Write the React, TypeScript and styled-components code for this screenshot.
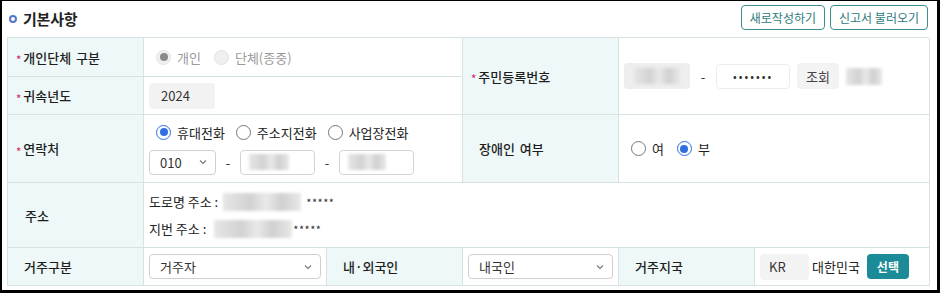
import styled, { createGlobalStyle } from "styled-components";

const GlobalStyle = createGlobalStyle`
  html, body {
    margin: 0;
    padding: 0;
    background: #000;
  }
  body {
    font-family: "Noto Sans CJK KR", "Noto Sans", sans-serif;
    color: #222;
  }
  * { box-sizing: border-box; }
`;

const Page = styled.div`
  background: #fff;
  margin: 1px 3px 0 2px;
  height: 289px;
  padding: 2px 8px 0 5px;
`;

const Header = styled.div`
  display: flex;
  align-items: center;
  justify-content: space-between;
  height: 34px;
  padding-left: 2px;
`;

const Title = styled.h2`
  display: flex;
  align-items: center;
  gap: 6px;
  margin: 0 0 4px;
  font-size: 15px;
  font-weight: 700;
  color: #222;
  letter-spacing: -0.2px;
`;

const Ring = styled.span`
  width: 8px;
  height: 8px;
  border-radius: 50%;
  border: 2px solid #5376cc;
  margin-top: 1px;
`;

const HeaderButtons = styled.div`
  display: flex;
  gap: 5px;
  margin-right: 1px;
  margin-bottom: 5px;
`;

const OutlineButton = styled.button`
  height: 25px;
  padding: 0 8px;
  border: 1px solid #3f8d8f;
  border-radius: 4px;
  background: #fff;
  color: #2d7a7d;
  font-family: inherit;
  font-size: 12px;
  cursor: pointer;
`;

const Grid = styled.div`
  display: grid;
  grid-template-columns: 136px 183px 136px 156px 136px 175px;
  grid-template-rows: 39px 38px 68px 65px 38px;
  border-top: 1px solid #d7e2e2;
  border-left: 1px solid #d7e2e2;
`;

const Cell = styled.div<{ $span?: number; $rows?: number }>`
  grid-column: span ${(p) => p.$span ?? 1};
  grid-row: span ${(p) => p.$rows ?? 1};
  border-right: 1px solid #d7e2e2;
  border-bottom: 1px solid #d7e2e2;
  display: flex;
  align-items: center;
  font-size: 13px;
`;

const Label = styled(Cell)`
  background: #eef8f8;
  padding-left: 16px;
  color: #1e1e1e;
  font-weight: 500;
  word-spacing: 2px;
`;

const Req = styled.span`
  color: #d0306a;
  font-size: 11px;
  margin-left: -8px;
  margin-right: 2px;
  transform: translateY(2px);
  display: inline-block;
`;

const Value = styled(Cell)<{ $col?: boolean }>`
  padding: 0 5px;
  gap: 8px;
  flex-direction: ${(p) => (p.$col ? "column" : "row")};
  align-items: ${(p) => (p.$col ? "flex-start" : "center")};
  justify-content: ${(p) => (p.$col ? "center" : "flex-start")};
`;

const Line = styled.div<{ $gap?: number }>`
  display: flex;
  align-items: center;
  gap: ${(p) => p.$gap ?? 8}px;
`;

const RadioItem = styled.label<{ $disabled?: boolean }>`
  display: flex;
  align-items: center;
  gap: 6px;
  margin-left: 7px;
  color: ${(p) => (p.$disabled ? "#9a9a9a" : "#222")};
`;

const RadioDot = styled.span<{ $checked?: boolean; $disabled?: boolean }>`
  width: 15px;
  height: 15px;
  border-radius: 50%;
  border: 1px solid
    ${(p) => (p.$disabled ? "#e2e2e2" : p.$checked ? "#2f6fe0" : "#777")};
  background: ${(p) => (p.$disabled ? "#f0f0f0" : "#fff")};
  display: flex;
  align-items: center;
  justify-content: center;
  &::after {
    content: "";
    display: ${(p) => (p.$checked ? "block" : "none")};
    width: 8px;
    height: 8px;
    border-radius: 50%;
    background: ${(p) => (p.$disabled ? "#8a8a8a" : "#2f6fe0")};
  }
`;

const ReadBox = styled.div<{ $w: number }>`
  width: ${(p) => p.$w}px;
  height: 26px;
  border-radius: 4px;
  background: #f2f2f2;
  display: flex;
  align-items: center;
  padding: 0 12px;
  font-size: 13px;
  color: #333;
`;

const InputBox = styled.div<{ $w: number; $soft?: boolean }>`
  width: ${(p) => p.$w}px;
  height: 25px;
  border: 1px solid ${(p) => (p.$soft ? "#ececec" : "#d4d4d4")};
  border-radius: 4px;
  background: #fff;
  display: flex;
  align-items: center;
  padding: 0 8px;
  color: #333;
  font-size: 13px;
`;

const Dots = styled.span`
  letter-spacing: 2px;
  font-size: 11px;
  padding-left: 8px;
`;

const SelectBox = styled.div<{ $w: number }>`
  width: ${(p) => p.$w}px;
  height: 25px;
  border: 1px solid #cfcfcf;
  border-radius: 4px;
  background: #fff;
  display: flex;
  align-items: center;
  justify-content: space-between;
  padding: 0 8px 0 10px;
  font-size: 13px;
  color: #333;
`;

const Dash = styled.span<{ $m: number }>`
  color: #333;
  width: 10px;
  text-align: center;
  margin: 0 ${(p) => p.$m}px;
`;

const Blur = styled.span<{ $w: number; $h?: number }>`
  display: inline-block;
  width: ${(p) => p.$w}px;
  height: ${(p) => p.$h ?? 18}px;
  background: linear-gradient(90deg, #e6e6e6 0%, #d2d2d2 35%, #e9e9e9 55%, #d0d0d0 75%, #e8e8e8 100%);
  filter: blur(1.5px);
`;

const GrayBox = styled.div`
  width: 66px;
  height: 26px;
  border-radius: 4px;
  background: #eeeeee;
  display: flex;
  align-items: center;
  justify-content: center;
`;

const SmallGray = styled.button`
  height: 26px;
  padding: 0 9px;
  margin-left: 7px;
  border: none;
  border-radius: 4px;
  background: #f3f3f3;
  font-family: inherit;
  font-size: 13px;
  color: #444;
`;

const Stars = styled.span`
  font-size: 11px;
  color: #333;
  letter-spacing: 0.5px;
`;

const KrBox = styled.div`
  width: 49px;
  height: 26px;
  border-radius: 4px;
  background: #f3f3f3;
  display: flex;
  align-items: center;
  padding-left: 9px;
  color: #333;
`;

const Country = styled.span`
  margin-left: -5px;
  color: #222;
`;

const PrimaryButton = styled.button`
  height: 25px;
  padding: 0 10px;
  margin-left: -1px;
  border: none;
  border-radius: 4px;
  background: #1b8b98;
  color: #fff;
  font-family: inherit;
  font-size: 12px;
  font-weight: 600;
`;

const Chevron = () => (
  <svg width="8" height="6" viewBox="0 0 8 6" fill="none">
    <path d="M1 1.5 L4 4.5 L7 1.5" stroke="#777" strokeWidth="1.1" />
  </svg>
);

function Radio({
  label,
  checked,
  disabled,
}: {
  label: string;
  checked?: boolean;
  disabled?: boolean;
}) {
  return (
    <RadioItem $disabled={disabled}>
      <RadioDot $checked={checked} $disabled={disabled} />
      {label}
    </RadioItem>
  );
}

export default function App() {
  return (
    <>
      <GlobalStyle />
      <Page>
        <Header>
          <Title>
            <Ring />
            기본사항
          </Title>
          <HeaderButtons>
            <OutlineButton>새로작성하기</OutlineButton>
            <OutlineButton>신고서 불러오기</OutlineButton>
          </HeaderButtons>
        </Header>
        <Grid>
          <Label>
            <Req>*</Req>개인단체 구분
          </Label>
          <Value $span={2}>
            <Line $gap={6}>
              <Radio label="개인" checked disabled />
              <Radio label="단체(종중)" disabled />
            </Line>
          </Value>
          <Label $rows={2}>
            <Req>*</Req>주민등록번호
          </Label>
          <Value $span={2} $rows={2}>
            <Line $gap={0}>
              <GrayBox>
                <Blur $w={46} $h={16} />
              </GrayBox>
              <Dash $m={8}>-</Dash>
              <InputBox $w={74} $soft>
                <Dots>•••••••</Dots>
              </InputBox>
              <SmallGray>조회</SmallGray>
              <Blur $w={36} $h={17} style={{ marginLeft: 7 }} />
            </Line>
          </Value>

          <Label>
            <Req>*</Req>귀속년도
          </Label>
          <Value $span={2}>
            <ReadBox $w={66}>2024</ReadBox>
          </Value>

          <Label>
            <Req>*</Req>연락처
          </Label>
          <Value $span={2} $col>
            <Line $gap={4}>
              <Radio label="휴대전화" checked />
              <Radio label="주소지전화" />
              <Radio label="사업장전화" />
            </Line>
            <Line $gap={0}>
              <SelectBox $w={67}>
                010
                <Chevron />
              </SelectBox>
              <Dash $m={7}>-</Dash>
              <InputBox $w={75}>
                <Blur $w={40} $h={16} />
              </InputBox>
              <Dash $m={7}>-</Dash>
              <InputBox $w={75}>
                <Blur $w={38} $h={16} />
              </InputBox>
            </Line>
          </Value>
          <Label>장애인 여부</Label>
          <Value $span={2}>
            <Line $gap={6}>
              <Radio label="여" />
              <Radio label="부" checked />
            </Line>
          </Value>

          <Label style={{ paddingLeft: 17 }}>주소</Label>
          <Value $span={5} $col>
            <Line $gap={5}>
              <span>도로명 주소 :</span>
              <Blur $w={78} />
              <Stars>*****</Stars>
            </Line>
            <Line $gap={5}>
              <span>지번 주소 :</span>
              <Blur $w={78} style={{ marginLeft: 3 }} />
              <Stars style={{ marginLeft: -4 }}>*****</Stars>
            </Line>
          </Value>

          <Label>거주구분</Label>
          <Value>
            <SelectBox $w={172}>
              거주자
              <Chevron />
            </SelectBox>
          </Value>
          <Label>내·외국인</Label>
          <Value>
            <SelectBox $w={145}>
              내국인
              <Chevron />
            </SelectBox>
          </Value>
          <Label>거주지국</Label>
          <Value>
            <KrBox>KR</KrBox>
            <Country>대한민국</Country>
            <PrimaryButton>선택</PrimaryButton>
          </Value>
        </Grid>
      </Page>
    </>
  );
}
